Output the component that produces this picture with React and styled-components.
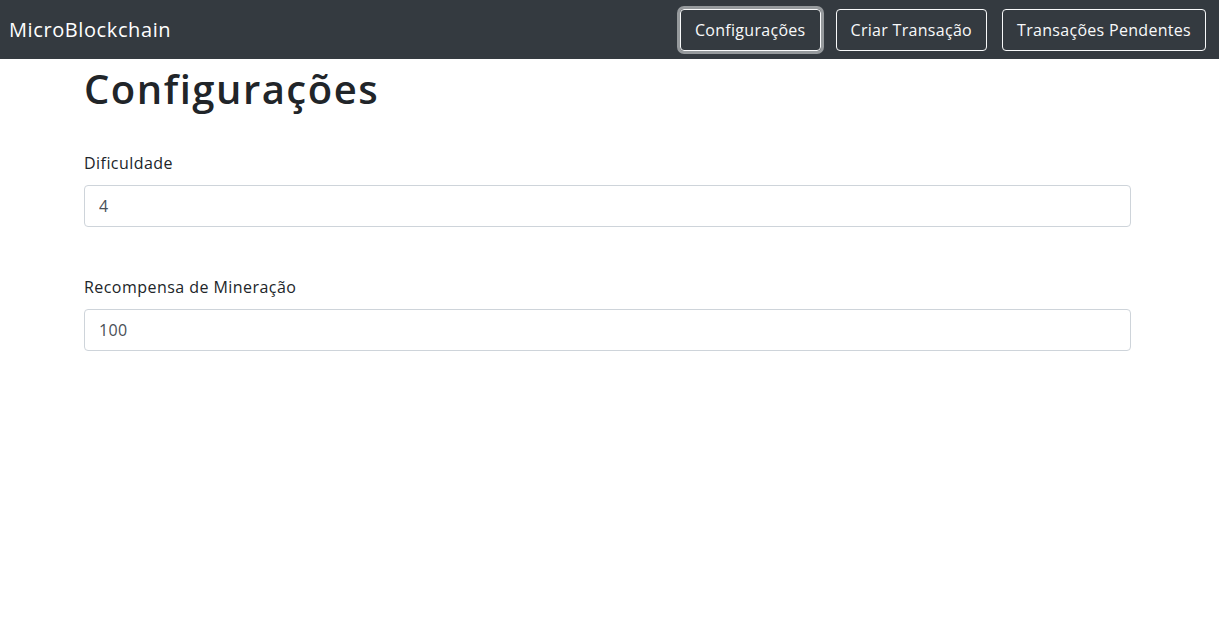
import React from "react";
import styled, { createGlobalStyle } from "styled-components";

const Global = createGlobalStyle`
  html, body { margin: 0; padding: 0; background: #fff; }
  body {
    font-family: "Open Sans", "Noto Sans", sans-serif;
    color: #212529;
    font-size: 16px;
    line-height: 1.5;
  }
  * { box-sizing: border-box; }
`;

const Navbar = styled.nav`
  display: flex;
  align-items: center;
  justify-content: space-between;
  height: 59px;
  padding: 0 13px 0 9px;
  background: #343a40;
`;

const Brand = styled.a`
  color: #fff;
  font-size: 20px;
  line-height: 30px;
  text-decoration: none;
  letter-spacing: 0.6px;
`;

const NavButtons = styled.div`
  display: flex;
  align-items: center;
  gap: 15px;
`;

const NavButton = styled.button`
  font-family: inherit;
  font-size: 16px;
  line-height: 24px;
  padding: 8px 14px;
  color: #f8f9fa;
  background: transparent;
  border: 1px solid #f8f9fa;
  border-radius: 4px;
  letter-spacing: 0.3px;
  box-shadow: ${(p) => (p.$focused ? "0 0 0 3px rgba(248,249,250,0.5)" : "none")};
  cursor: pointer;
`;

const Container = styled.main`
  padding: 0 88px 0 84px;
`;

const Title = styled.h1`
  margin: 6px 0 38px;
  font-size: 40px;
  line-height: 48px;
  font-weight: 600;
  letter-spacing: 1.5px;
`;

const FormGroup = styled.div`
  display: flex;
  flex-direction: column;
  margin-bottom: 48px;
`;

const Label = styled.label`
  font-size: 16px;
  line-height: 24px;
  margin-bottom: 10px;
  letter-spacing: 0.45px;
`;

const Input = styled.input`
  font-family: inherit;
  height: 42px;
  padding: 8px 14px;
  font-size: 16px;
  color: #495057;
  border: 1px solid #ced4da;
  border-radius: 4px;
  background: #fff;
  outline: none;
  letter-spacing: 0.3px;
`;

export default function App() {
  return (
    <>
      <Global />
      <Navbar>
        <Brand href="#">MicroBlockchain</Brand>
        <NavButtons>
          <NavButton $focused>Configurações</NavButton>
          <NavButton>Criar Transação</NavButton>
          <NavButton>Transações Pendentes</NavButton>
        </NavButtons>
      </Navbar>
      <Container>
        <Title>Configurações</Title>
        <FormGroup>
          <Label>Dificuldade</Label>
          <Input defaultValue="4" />
        </FormGroup>
        <FormGroup>
          <Label>Recompensa de Mineração</Label>
          <Input defaultValue="100" />
        </FormGroup>
      </Container>
    </>
  );
}
